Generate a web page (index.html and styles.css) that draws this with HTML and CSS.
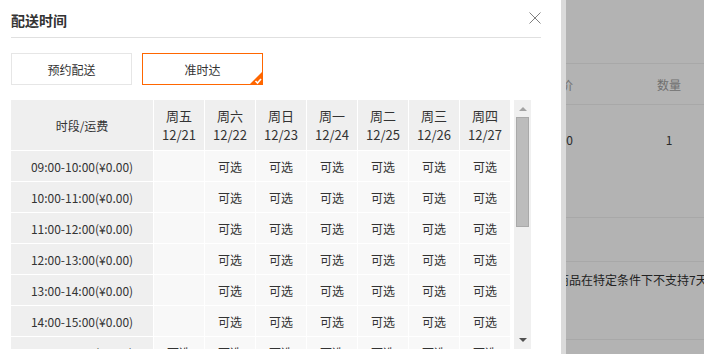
FILE: index.html
```html
<!DOCTYPE html>
<html lang="zh-CN">
<head>
    <meta charset="UTF-8">
    <meta name="viewport" content="width=device-width, initial-scale=1.0">
    <title>配送时间</title>
    <link rel="stylesheet" href="styles.css">
</head>
<body>
    <div class="dialog">
        <div class="dialog-head">
            <h3 class="dialog-title">配送时间</h3>
            <button class="close" aria-label="关闭">
                <svg width="12" height="12" viewBox="0 0 12 12">
                    <path d="M0.5 0.5 L11.5 11.5 M11.5 0.5 L0.5 11.5" stroke="#808080" stroke-width="1" fill="none"/>
                </svg>
            </button>
        </div>

        <div class="modes">
            <button class="mode">预约配送</button>
            <button class="mode active">准时达
                <span class="corner">
                    <svg width="14" height="14" viewBox="0 0 14 14">
                        <polygon points="14,0 14,14 0,14" fill="#ff6600"/>
                        <path d="M6.5 10 L8.5 12 L12 8" stroke="#fff" stroke-width="1.6" fill="none"/>
                    </svg>
                </span>
            </button>
        </div>

        <div class="schedule">
            <div class="grid-wrap">
                <div class="grid">
                    <div class="cell head first">时段/运费</div>
                    <div class="cell head">周五<br>12/21</div>
                    <div class="cell head">周六<br>12/22</div>
                    <div class="cell head">周日<br>12/23</div>
                    <div class="cell head">周一<br>12/24</div>
                    <div class="cell head">周二<br>12/25</div>
                    <div class="cell head">周三<br>12/26</div>
                    <div class="cell head">周四<br>12/27</div>

                    <div class="cell first">09:00-10:00(¥0.00)</div>
                    <div class="cell"></div>
                    <div class="cell">可选</div><div class="cell">可选</div><div class="cell">可选</div>
                    <div class="cell">可选</div><div class="cell">可选</div><div class="cell">可选</div>

                    <div class="cell first">10:00-11:00(¥0.00)</div>
                    <div class="cell"></div>
                    <div class="cell">可选</div><div class="cell">可选</div><div class="cell">可选</div>
                    <div class="cell">可选</div><div class="cell">可选</div><div class="cell">可选</div>

                    <div class="cell first">11:00-12:00(¥0.00)</div>
                    <div class="cell"></div>
                    <div class="cell">可选</div><div class="cell">可选</div><div class="cell">可选</div>
                    <div class="cell">可选</div><div class="cell">可选</div><div class="cell">可选</div>

                    <div class="cell first">12:00-13:00(¥0.00)</div>
                    <div class="cell"></div>
                    <div class="cell">可选</div><div class="cell">可选</div><div class="cell">可选</div>
                    <div class="cell">可选</div><div class="cell">可选</div><div class="cell">可选</div>

                    <div class="cell first">13:00-14:00(¥0.00)</div>
                    <div class="cell"></div>
                    <div class="cell">可选</div><div class="cell">可选</div><div class="cell">可选</div>
                    <div class="cell">可选</div><div class="cell">可选</div><div class="cell">可选</div>

                    <div class="cell first">14:00-15:00(¥0.00)</div>
                    <div class="cell"></div>
                    <div class="cell">可选</div><div class="cell">可选</div><div class="cell">可选</div>
                    <div class="cell">可选</div><div class="cell">可选</div><div class="cell">可选</div>

                    <div class="cell first">15:00-16:00(¥0.00)</div>
                    <div class="cell">可选</div>
                    <div class="cell">可选</div><div class="cell">可选</div><div class="cell">可选</div>
                    <div class="cell">可选</div><div class="cell">可选</div><div class="cell">可选</div>

                    <div class="cell first">16:00-17:00(¥0.00)</div>
                    <div class="cell">可选</div>
                    <div class="cell">可选</div><div class="cell">可选</div><div class="cell">可选</div>
                    <div class="cell">可选</div><div class="cell">可选</div><div class="cell">可选</div>
                </div>
            </div>
            <div class="scrollbar">
                <span class="arrow up"></span>
                <span class="thumb"></span>
                <span class="arrow down"></span>
            </div>
        </div>
    </div>

    <div class="backdrop">
        <div class="bd-space"></div>
        <div class="bd-row bd-head">
            <span class="bd-price">单价</span>
            <span class="bd-qty">数量</span>
        </div>
        <div class="bd-row bd-item">
            <span class="bd-price">¥89.00</span>
            <span class="bd-qty">1</span>
        </div>
        <div class="bd-row bd-empty"></div>
        <div class="bd-row bd-note">
            <span class="bd-text">商品在特定条件下不支持7天无理由退货</span>
        </div>
    </div>
</body>
</html>
```

FILE: styles.css
```css
body {
    margin: 0;
    height: 354px;
    display: flex;
    overflow: hidden;
    font-family: "Noto Sans CJK SC", "Noto Sans", sans-serif;
    font-size: 12px;
    color: #333;
    background-color: #fff;
}

.dialog {
    width: 566px;
    flex: none;
    box-sizing: border-box;
    padding-left: 11px;
    background-color: #fff;
    border-right: 5px solid #dadada;
}

.dialog-head {
    width: 530px;
    height: 38px;
    padding-top: 3px;
    box-sizing: border-box;
    display: flex;
    align-items: center;
    justify-content: space-between;
    border-bottom: 1px solid #e0e0e0;
}

.dialog-title {
    margin: 0;
    font-size: 14px;
    font-weight: bold;
    color: #333;
    line-height: 20px;
}

.close {
    border: none;
    background: none;
    padding: 0;
    width: 12px;
    height: 12px;
    margin-top: -5px;
    cursor: pointer;
    display: flex;
}

.modes {
    display: flex;
    gap: 10px;
    margin-top: 15px;
}

.mode {
    position: relative;
    width: 121px;
    height: 32px;
    border: 1px solid #e6e6e6;
    background-color: #fff;
    font-family: inherit;
    font-size: 12px;
    color: #333;
    padding: 0;
    cursor: pointer;
}

.mode.active {
    border-color: #ff6600;
}

.corner {
    position: absolute;
    right: -1px;
    bottom: -1px;
    width: 14px;
    height: 14px;
    display: flex;
}

.schedule {
    display: flex;
    gap: 4px;
    margin-top: 15px;
}

.grid-wrap {
    width: 499px;
    height: 249px;
    overflow: hidden;
}

.grid {
    display: grid;
    grid-template-columns: 142px repeat(7, 50px);
    grid-auto-rows: 30px;
    grid-template-rows: 50px;
    gap: 1px;
    background-color: #fff;
}

.cell {
    display: flex;
    align-items: center;
    justify-content: center;
    text-align: center;
    background-color: #f8f8f8;
    line-height: 19px;
}

.cell.first {
    background-color: #efefef;
}

.cell.head {
    background-color: #efefef;
    font-size: 13px;
}

.cell.head.first {
    font-size: 12px;
}

.scrollbar {
    width: 17px;
    height: 249px;
    background-color: #f0f0f0;
    display: flex;
    flex-direction: column;
    align-items: center;
}

.arrow {
    width: 0;
    height: 0;
    border-left: 4px solid transparent;
    border-right: 4px solid transparent;
}

.arrow.up {
    margin-top: 7px;
    border-bottom: 4px solid #a3a3a3;
}

.arrow.down {
    margin-top: auto;
    margin-bottom: 7px;
    border-top: 4px solid #505050;
}

.thumb {
    width: 11px;
    height: 108px;
    margin-top: 6px;
    background-color: #bcbcbc;
    border: 1px solid #a9a9a9;
}

.backdrop {
    flex: 1;
    background-color: #b3b3b3;
    overflow: hidden;
    font-size: 12px;
}

.bd-space {
    height: 63px;
}

.bd-row {
    display: flex;
    align-items: center;
    border-top: 1px solid #a8a8a8;
    white-space: nowrap;
}

.bd-head {
    height: 40px;
    color: #707070;
}

.bd-item {
    height: 113px;
    padding-bottom: 44px;
    box-sizing: border-box;
    color: #2a2a2a;
}

.bd-price {
    flex: none;
    width: 60px;
    margin-left: -53px;
    text-align: right;
}

.bd-qty {
    flex: none;
    width: 80px;
    margin-left: 56px;
    text-align: center;
}

.bd-empty {
    height: 43px;
}

.bd-note {
    height: 79px;
    align-items: flex-start;
    padding-top: 9px;
    box-sizing: border-box;
    border-bottom: 1px solid #a8a8a8;
    color: #222;
}

.bd-text {
    margin-left: -9px;
}
```
